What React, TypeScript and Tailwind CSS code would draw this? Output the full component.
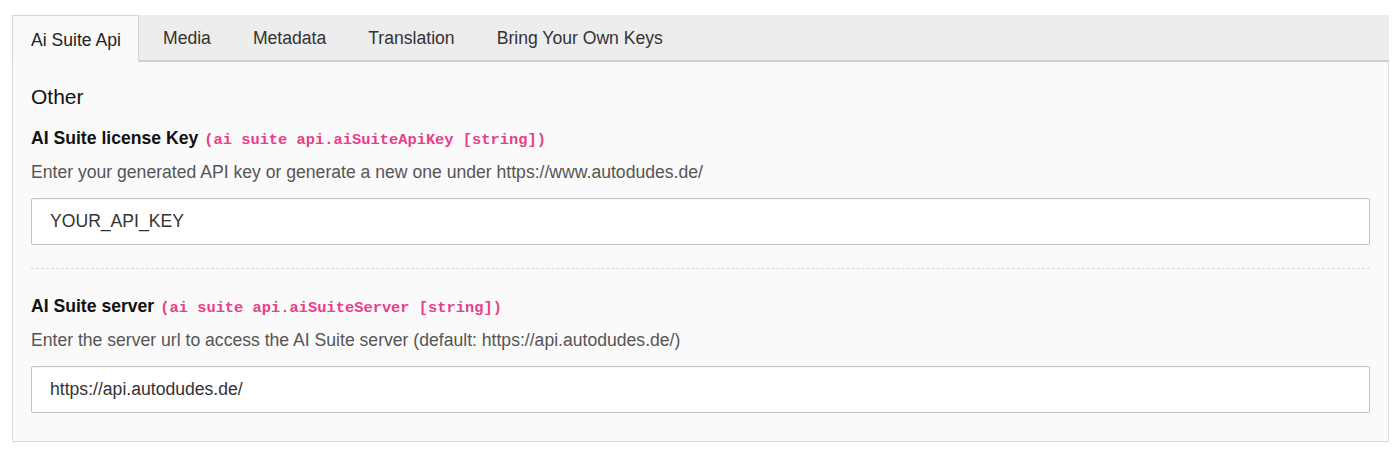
import React from 'react';

const tabs = ['Ai Suite Api', 'Media', 'Metadata', 'Translation', 'Bring Your Own Keys'];

interface FieldProps {
    label: string;
    path: string;
    description: string;
    value: string;
}

const Field: React.FC<FieldProps> = ({ label, path, description, value }) => (
    <div>
        <div className="flex items-baseline gap-[6px] h-[26px] leading-[26px]">
            <span className="font-bold text-[17.6px] text-[#111]">{label}</span>
            <span className="font-['Liberation_Mono',monospace] font-bold text-[15.4px] text-[#e83e8c]">{path}</span>
        </div>
        <div className="mt-[8px] text-[17.6px] text-[#555] h-[26px] leading-[26px]">{description}</div>
        <input
            readOnly
            value={value}
            className="mt-[13px] block w-full h-[47px] px-[18px] bg-white border border-[#c4c4c4] rounded-[2px] text-[17.6px] text-[#333] outline-none shadow-[inset_0_1px_1px_rgba(0,0,0,0.05)]"
        />
    </div>
);

export default function App() {
    return (
        <div className="bg-white min-h-[450px] pt-[15px] font-['Liberation_Sans',Arial,sans-serif]">
            <div className="ml-3 w-[1377px]">
                <div className="flex h-[47px] bg-[#ededed] border-b-2 border-[#d0d0d0]">
                    {tabs.map((t, i) => (
                        <div
                            key={t}
                            className={
                                i === 0
                                    ? 'flex items-center pt-[2px] pl-[18px] pr-[17px] bg-[#fafafa] border border-b-0 border-[#d6d6d6] text-[17.6px] text-[#222] h-[47px] mr-[3px]'
                                    : 'flex items-center pt-[2px] px-[21px] text-[17.6px] text-[#333]'
                            }
                        >
                            {t}
                        </div>
                    ))}
                </div>
                <div className="bg-[#fafafa] border border-t-0 border-[#dcdcdc] px-[18px] pt-[20px] pb-[28px]">
                    <h2 className="text-[21px] text-[#111] leading-[30px]">Other</h2>
                    <div className="mt-[13px]">
                        <Field
                            label="AI Suite license Key"
                            path="(ai suite api.aiSuiteApiKey [string])"
                            description="Enter your generated API key or generate a new one under https://www.autodudes.de/"
                            value="YOUR_API_KEY"
                        />
                    </div>
                    <div className="mt-[23px] border-t border-dashed border-[#d8d8d8]" />
                    <div className="mt-[24px]">
                        <Field
                            label="AI Suite server"
                            path="(ai suite api.aiSuiteServer [string])"
                            description="Enter the server url to access the AI Suite server (default: https://api.autodudes.de/)"
                            value="https://api.autodudes.de/"
                        />
                    </div>
                </div>
            </div>
        </div>
    );
}
